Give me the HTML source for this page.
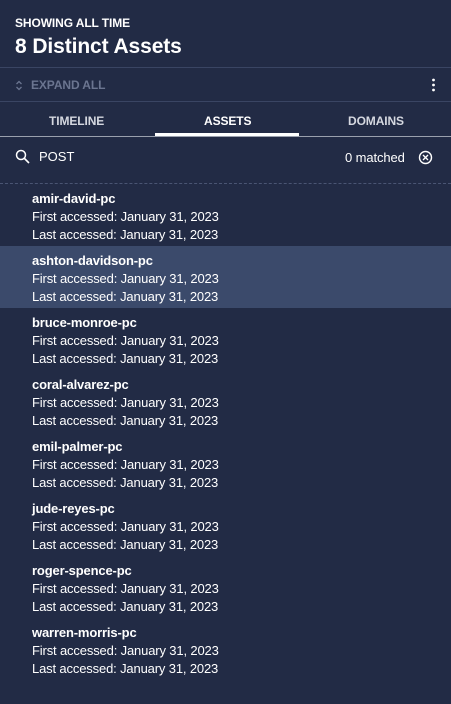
<!DOCTYPE html>
<html><head><style>
*{margin:0;padding:0;box-sizing:border-box}
body{width:451px;height:704px;background:#222b45;font-family:"Liberation Sans",sans-serif;color:#fff;position:relative;overflow:hidden}
.a{position:absolute}
.sm{font-size:12px;font-weight:bold;letter-spacing:-0.1px}
.item{position:absolute;left:0;width:451px;height:62px;padding:6px 0 0 32px;font-size:13px;line-height:18px;letter-spacing:-0.15px}
.item b{display:block}
.hl{background:#3b4a6b}
</style></head><body>
<div class="a sm" style="left:15px;top:16px">SHOWING ALL TIME</div>
<div class="a" style="left:15px;top:35px;font-size:21px;font-weight:bold;letter-spacing:-0.1px">8 Distinct Assets</div>
<div class="a" style="left:0;top:67px;width:451px;height:1px;background:#3a4563"></div>
<svg class="a" style="left:15px;top:80px" width="8" height="11"><path d="M1.5 4 L4 1.5 L6.5 4 M1.5 7 L4 9.5 L6.5 7" stroke="#6b7590" stroke-width="1.3" fill="none"/></svg>
<div class="a sm" style="left:31px;top:78px;color:#6b7590">EXPAND ALL</div>
<svg class="a" style="left:431px;top:78px" width="5" height="14"><circle cx="2.5" cy="2" r="1.4" fill="#fff"/><circle cx="2.5" cy="7" r="1.4" fill="#fff"/><circle cx="2.5" cy="12" r="1.4" fill="#fff"/></svg>
<div class="a" style="left:0;top:101px;width:451px;height:1px;background:#3a4563"></div>
<div class="a sm" style="left:49px;top:114px;color:#d5d8e0">TIMELINE</div>
<div class="a sm" style="left:204px;top:114px">ASSETS</div>
<div class="a sm" style="left:348px;top:114px;color:#d5d8e0">DOMAINS</div>
<div class="a" style="left:0;top:136px;width:451px;height:1px;background:#9aa0ad"></div>
<div class="a" style="left:155px;top:133px;width:144px;height:3px;background:#fff"></div>
<svg class="a" style="left:15px;top:149px" width="16" height="16"><circle cx="6" cy="6" r="4.5" stroke="#fff" stroke-width="1.5" fill="none"/><path d="M9.5 9.5 L14 14" stroke="#fff" stroke-width="1.6"/></svg>
<div class="a" style="left:39px;top:149px;font-size:13px">POST</div>
<div class="a" style="left:345px;top:150px;font-size:13px;letter-spacing:-0.1px">0 matched</div>
<svg class="a" style="left:418px;top:150px" width="15" height="15"><circle cx="7.5" cy="7.5" r="6" stroke="#fff" stroke-width="1.4" fill="none"/><path d="M5 5 L10 10 M10 5 L5 10" stroke="#fff" stroke-width="1.4"/></svg>
<div class="a" style="left:0;top:183px;width:451px;border-top:1px dashed #4a5573"></div>
<div class="item" style="top:184px"><b>amir-david-pc</b>First accessed: January 31, 2023<br>Last accessed: January 31, 2023</div>
<div class="item hl" style="top:246px"><b>ashton-davidson-pc</b>First accessed: January 31, 2023<br>Last accessed: January 31, 2023</div>
<div class="item" style="top:308px"><b>bruce-monroe-pc</b>First accessed: January 31, 2023<br>Last accessed: January 31, 2023</div>
<div class="item" style="top:370px"><b>coral-alvarez-pc</b>First accessed: January 31, 2023<br>Last accessed: January 31, 2023</div>
<div class="item" style="top:432px"><b>emil-palmer-pc</b>First accessed: January 31, 2023<br>Last accessed: January 31, 2023</div>
<div class="item" style="top:494px"><b>jude-reyes-pc</b>First accessed: January 31, 2023<br>Last accessed: January 31, 2023</div>
<div class="item" style="top:556px"><b>roger-spence-pc</b>First accessed: January 31, 2023<br>Last accessed: January 31, 2023</div>
<div class="item" style="top:618px"><b>warren-morris-pc</b>First accessed: January 31, 2023<br>Last accessed: January 31, 2023</div>
</body></html>
